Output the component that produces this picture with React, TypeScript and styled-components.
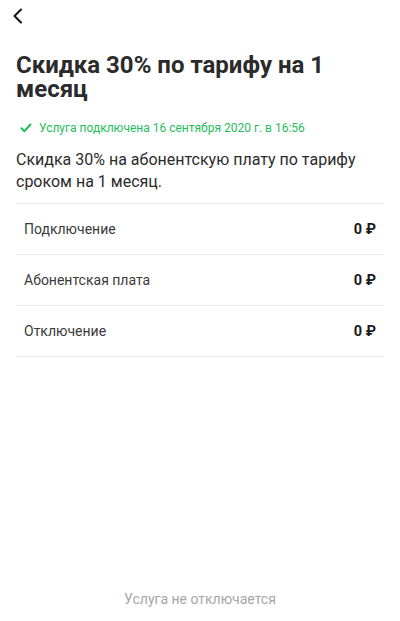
import styled, { createGlobalStyle } from 'styled-components';

const GlobalStyle = createGlobalStyle`
  html, body {
    margin: 0;
    padding: 0;
    background: #ffffff;
  }
  body {
    font-family: Roboto, "Noto Sans", sans-serif;
    -webkit-font-smoothing: antialiased;
  }
`;

const rows = [
  { id: 1, label: 'Подключение', value: '0 ₽' },
  { id: 2, label: 'Абонентская плата', value: '0 ₽' },
  { id: 3, label: 'Отключение', value: '0 ₽' },
];

export default function App() {
  return (
    <>
      <GlobalStyle />
      <Page>
        <TopBar>
          <BackButton aria-label="Назад">
            <svg width="12" height="16" viewBox="0 0 12 16" fill="none">
              <path d="M9 1.5L2.5 8L9 14.5" stroke="#111" strokeWidth="2" strokeLinecap="round" strokeLinejoin="round" />
            </svg>
          </BackButton>
        </TopBar>

        <Content>
          <Title>Скидка 30% по тарифу на 1 месяц</Title>

          <Status>
            <svg width="12" height="10" viewBox="0 0 12 10" fill="none">
              <path d="M1.5 5.2L4.5 8.2L10.5 1.5" stroke="#1fbd5a" strokeWidth="2" strokeLinecap="round" strokeLinejoin="round" />
            </svg>
            Услуга подключена 16 сентября 2020 г. в 16:56
          </Status>

          <Description>
            Скидка 30% на абонентскую плату по тарифу сроком на 1 месяц.
          </Description>

          <List>
            {rows.map((row) => (
              <Row key={row.id}>
                <Label>{row.label}</Label>
                <Value>{row.value}</Value>
              </Row>
            ))}
          </List>
        </Content>

        <Footer>Услуга не отключается</Footer>
      </Page>
    </>
  );
}

const Page = styled.div`
  width: 400px;
  height: 621px;
  display: flex;
  flex-direction: column;
  box-sizing: border-box;
`;

const TopBar = styled.div`
  height: 32px;
  display: flex;
  align-items: center;
  padding: 0 12px;
`;

const BackButton = styled.button`
  background: none;
  border: none;
  padding: 0;
  display: flex;
  align-items: center;
  cursor: pointer;
`;

const Content = styled.div`
  flex: 1;
  padding: 0 16px;
`;

const Title = styled.h1`
  margin: 21px 0 0;
  font-size: 24px;
  line-height: 24px;
  font-weight: 700;
  color: #2b2b2b;
`;

const Status = styled.div`
  margin-top: 19px;
  padding-left: 4px;
  display: flex;
  align-items: center;
  gap: 7px;
  font-size: 12px;
  line-height: 16px;
  color: #1fbd5a;
`;

const Description = styled.p`
  margin: 13px 0 0;
  font-size: 16px;
  line-height: 22px;
  color: #2b2b2b;
`;

const List = styled.div`
  margin-top: 10px;
  border-top: 1px solid #e8e8e8;
`;

const Row = styled.div`
  height: 50px;
  display: flex;
  align-items: center;
  justify-content: space-between;
  padding: 0 8px;
  border-bottom: 1px solid #e8e8e8;
`;

const Label = styled.span`
  font-size: 14px;
  color: #3a3a3a;
`;

const Value = styled.span`
  font-size: 14.5px;
  font-weight: 700;
  color: #1a1a1a;
`;

const Footer = styled.div`
  height: 40px;
  padding-bottom: 2px;
  display: flex;
  align-items: center;
  justify-content: center;
  font-size: 14px;
  color: #a6a6a6;
`;
